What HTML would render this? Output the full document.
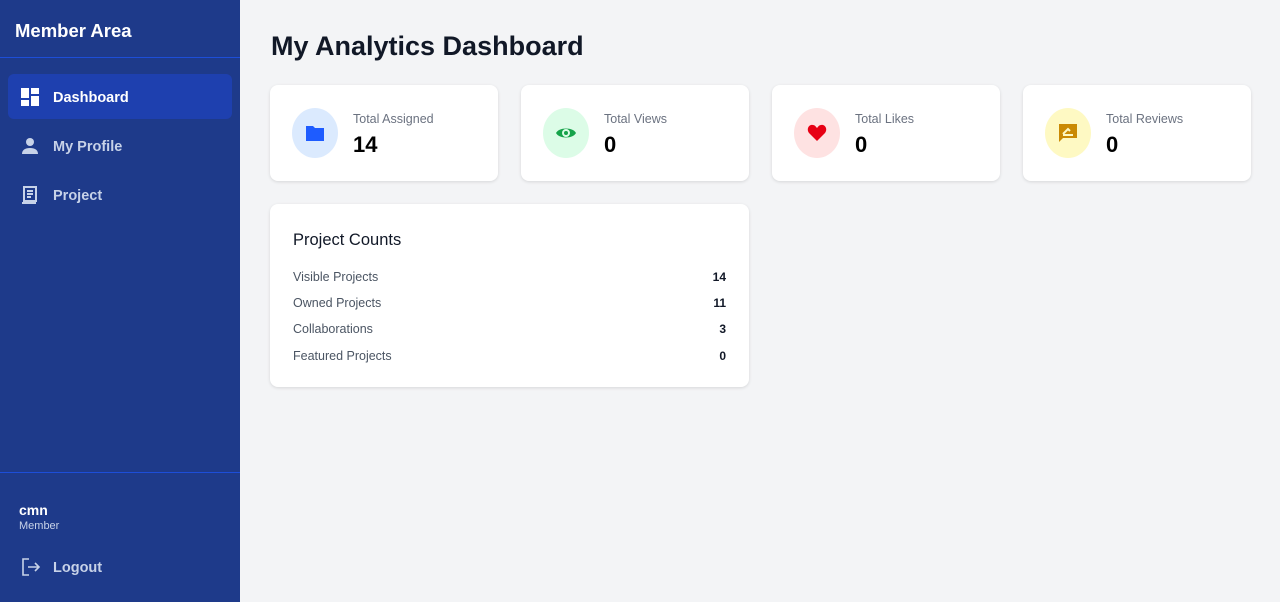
<!DOCTYPE html>
<html><head><style>
*{box-sizing:border-box;margin:0;padding:0}
body{width:1280px;height:602px;font-family:"Liberation Sans",sans-serif;background:#f3f4f6;position:relative;overflow:hidden}
.sb{position:absolute;left:0;top:0;width:240px;height:602px;background:#1e3a8a;color:#fff}
.sb h1{position:absolute;left:15px;top:20px;font-size:18.5px;font-weight:bold}
.hr{position:absolute;left:0;width:240px;height:1px;background:#1d4ed8}
.nav{position:absolute;left:8px;width:224px;height:45px;border-radius:6px;display:flex;align-items:center;font-size:14.5px;font-weight:bold;color:#c7d2e8}
.nav svg{position:absolute;left:13px}
.nav span{position:absolute;left:45px;top:16px}
.nav.act{background:#1e40af;color:#fff}
.card{position:absolute;background:#fff;border-radius:8px;box-shadow:0 1px 3px rgba(0,0,0,.12)}
.ic{position:absolute;left:22px;top:23px;width:46px;height:50px;border-radius:50%;display:flex;align-items:center;justify-content:center}
.lb{position:absolute;left:83px;top:27px;font-size:12.5px;color:#6b7280}
.vl{position:absolute;left:83px;top:47px;font-size:22px;font-weight:bold;color:#000}
.row{position:absolute;left:23px;right:23px;font-size:12.5px;color:#4b5563;display:flex;justify-content:space-between}
.row b{color:#111827;font-size:12px}
</style></head><body>
<div class="sb">
<h1>Member Area</h1>
<div class="hr" style="top:57px"></div>
<div class="nav act" style="top:74px"><svg width="18" height="18" viewBox="0 0 18 18" fill="#fff"><rect x="0" y="0" width="8" height="10"/><rect x="10" y="0" width="8" height="6"/><rect x="0" y="12" width="8" height="6"/><rect x="10" y="8" width="8" height="10"/></svg><span>Dashboard</span></div>
<div class="nav" style="top:123px"><svg width="18" height="18" viewBox="0 0 18 18" fill="#c7d2e8"><circle cx="9" cy="5" r="4"/><path d="M1 17c0-4 3-6 8-6s8 2 8 6z"/></svg><span>My Profile</span></div>
<div class="nav" style="top:172px"><svg width="18" height="18" viewBox="0 0 18 18" fill="none" stroke="#c7d2e8" stroke-width="2"><rect x="3" y="1" width="12" height="14"/><path d="M6 5h6M6 8h6M6 11h4"/><path d="M1 17h14" /></svg><span>Project</span></div>
<div class="hr" style="top:472px"></div>
<div style="position:absolute;left:19px;top:502px;font-size:14px;font-weight:bold">cmn</div>
<div style="position:absolute;left:19px;top:520px;font-size:11px;color:#c7d2e8">Member</div>
<div class="nav" style="top:544px"><svg width="20" height="20" viewBox="0 0 20 20" fill="none" stroke="#c7d2e8" stroke-width="1.6"><path d="M8 2H2v16h6M7 10h11M14 6l4 4-4 4"/></svg><span style="top:16px">Logout</span></div>
</div>
<div style="position:absolute;left:271px;top:31px;font-size:27px;font-weight:bold;color:#111827">My Analytics Dashboard</div>

<div class="card" style="left:270px;top:85px;width:228px;height:96px"><div class="ic" style="background:#dbeafe"><svg width="20" height="18" viewBox="0 0 20 18"><path d="M1 2h7l2 2h9v13H1z" fill="#1e5cff"/></svg></div><div class="lb">Total Assigned</div><div class="vl">14</div></div>
<div class="card" style="left:521px;top:85px;width:228px;height:96px"><div class="ic" style="background:#dcfce7"><svg width="22" height="16" viewBox="0 0 22 16"><path d="M1 8C4 2 18 2 21 8C18 14 4 14 1 8z" fill="#16a34a"/><circle cx="11" cy="8" r="4" fill="#dcfce7"/><circle cx="11" cy="8" r="2" fill="#16a34a"/></svg></div><div class="lb">Total Views</div><div class="vl">0</div></div>
<div class="card" style="left:772px;top:85px;width:228px;height:96px"><div class="ic" style="background:#fee2e2"><svg width="20" height="18" viewBox="0 0 20 18"><path d="M10 17L2 9C-1 5 2 0 6 1c2 0 3 2 4 3 1-1 2-3 4-3 4-1 7 4 4 8z" fill="#e70014"/></svg></div><div class="lb">Total Likes</div><div class="vl">0</div></div>
<div class="card" style="left:1023px;top:85px;width:228px;height:96px"><div class="ic" style="background:#fef9c3"><svg width="20" height="20" viewBox="0 0 20 20"><path d="M1 1h18v14H5l-4 4z" fill="#ca8a04"/><path d="M5 11l5-5 2 2M5 12h10" stroke="#fef9c3" stroke-width="2" fill="none"/></svg></div><div class="lb">Total Reviews</div><div class="vl">0</div></div>

<div class="card" style="left:270px;top:204px;width:479px;height:183px">
<div style="position:absolute;left:23px;top:27px;font-size:16.5px;color:#111827">Project Counts</div>
<div class="row" style="top:66px"><span>Visible Projects</span><b>14</b></div>
<div class="row" style="top:92px"><span>Owned Projects</span><b>11</b></div>
<div class="row" style="top:118px"><span>Collaborations</span><b>3</b></div>
<div class="row" style="top:145px"><span>Featured Projects</span><b>0</b></div>
</div>
</body></html>
